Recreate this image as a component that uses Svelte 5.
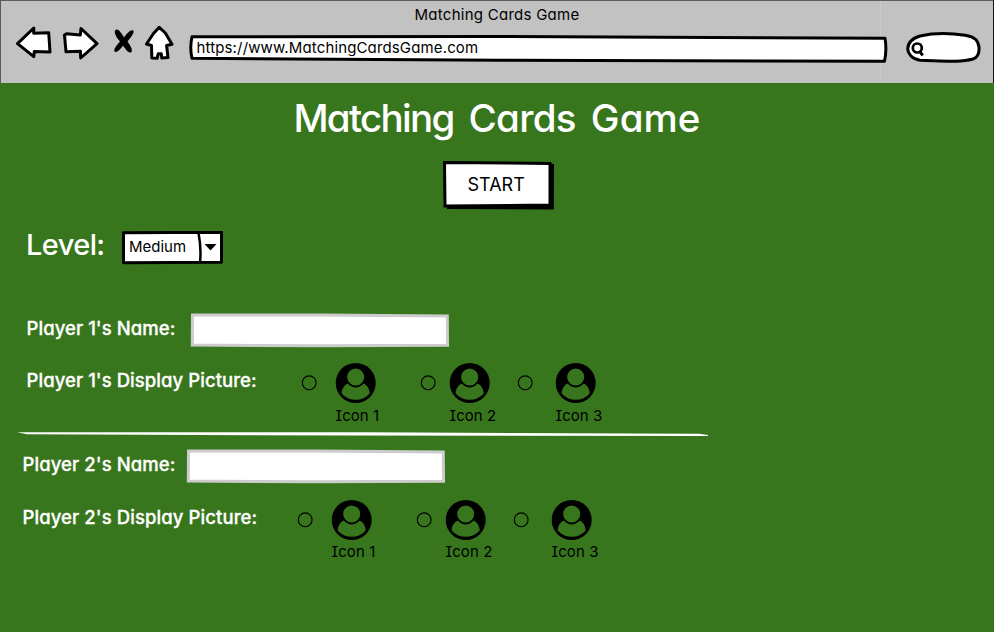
<script>
  const heading = [
    { word: 'Matching', spacing: -1.7 },
    { word: 'Cards', spacing: -0.7 },
    { word: 'Game', spacing: 0.1 }
  ];
  const players = [
    { id: 1, left: 26, gap: 16, spacing: 0.06, captionLine: 26 },
    { id: 2, left: 22, gap: 17, spacing: 0.09, captionLine: 24 }
  ];
  const options = [
    { n: 1, width: 119, gap: 18 },
    { n: 2, width: 97, gap: 13 },
    { n: 3, width: 90, gap: 22 }
  ];
</script>

<div class="page">
  <header>
    <div class="title">Matching Cards Game</div>
    <nav>
      <svg class="back" width="38" height="34" viewBox="15 26 38 34">
        <path class="ink" d="M17.5 43.6 33.8 28 33.7 33.2 48.7 32.8 50 52 34.3 51.4 33.8 56.7Z" />
      </svg>
      <svg class="forward" width="38" height="34" viewBox="62 26 38 34">
        <path class="ink" d="M64.5 35 66.5 33.8 80.3 35 81 28.5 97 43.6 80.7 58 80.4 51.3 66 51.8Z" />
      </svg>
      <svg class="stop" width="22" height="26" viewBox="113 28 22 26">
        <path d="M115.500 30C118 28.300 120.800 32 124 37.500 127 33 130.500 29.500 133 30.300 135.300 32 130.500 38 127.500 41.500 130 45 133 49.500 131.500 52 128.500 54.500 125.500 48.500 123 45.800 120.500 49 117 53 114.800 51.800 112.800 49.500 117 45 120 41.500 116 37 113.500 32 115.500 30Z" />
      </svg>
      <svg class="home" width="30" height="36" viewBox="144 25 30 36">
        <path class="ink" d="M159.200 27.300 165.300 33 172 44.300 166.600 45.500 168 57.600 161.800 58 161.200 53.800 158.200 53.800 157.200 58.200 151.800 58 151.500 45.500 146.500 44 153.500 33.500Z" />
      </svg>
      <div class="address">
        <svg width="700" height="29" viewBox="188 34 700 29">
          <path class="ink" d="M192 36.700 500 36.500 885 38.300Q887 50 884.500 61.200L500 60.300 192 58.300Q189.500 48 192 36.700Z" />
        </svg>
        <span>https://www.MatchingCardsGame.com</span>
      </div>
      <svg class="search" width="78" height="34" viewBox="905 31 78 34">
        <path class="ink" d="M920 36C932 33.300 950 33 965 35.200 976 37 978 41 979 47 979.500 53 978.500 57 973 59 960 62.500 945 61 920 60.300 912 59 908 54 907.700 49 908 42 913 38 920 36Z" />
        <circle cx="917.300" cy="48" r="4.500" fill="none" stroke="#000" stroke-width="2.700" />
        <path d="M919.500 50.800 922.700 55.500" stroke="#000" stroke-width="3" />
      </svg>
    </nav>
  </header>

  <main>
    <h1>
      {#each heading as h}
        <span style="letter-spacing: {h.spacing}px">{h.word}</span>
      {/each}
    </h1>
    <button class="start">
      <svg width="112" height="49" viewBox="443 161 112 49">
        <path d="M447 164 550 163.500 554 164 553.800 209.500 447 209 446.500 205Z" />
        <path d="M444.500 162.500 550 163.500 550 205 445 206Z" fill="#fff" stroke="#000" stroke-width="3" />
      </svg>
      <span>START</span>
    </button>

    <div class="level">
      <span class="level-label">Level:</span>
      <div class="select">
        <svg width="102" height="34" viewBox="122 231 102 34">
          <path class="box" d="M123.500 232.700 221.500 232.300 221.500 262.300 123.500 262.700Z" />
          <path d="M198.500 233Q201.500 248 200 262.500" fill="none" stroke="#000" stroke-width="2.500" />
          <path d="M204.500 244H216.500L210.500 250.500Z" />
        </svg>
        <span>Medium</span>
      </div>
    </div>

    {#each players as p}
      <section style="padding-left: {p.left}px; letter-spacing: {p.spacing}px">
        <div class="name">
          <label for="name{p.id}">Player {p.id}'s Name:</label>
          <div class="field">
            <svg width="260" height="35" viewBox="0 0 260 35">
              <path d="M2.500 2 130 2 257.300 3 257.500 32.300 130 32.800 2.300 32Z" fill="#fff" stroke="#ccc" stroke-width="3" />
            </svg>
            <input id="name{p.id}" type="text" />
          </div>
        </div>
        <div class="pictures" style="margin-top: {p.gap}px">
          <div class="caption">Player {p.id}'s Display Picture:</div>
          {#each options as o}
            <div class="option" style="width: {o.width}px; gap: {o.gap}px">
              <svg width="16" height="40" viewBox="0 0 16 40"><circle cx="8.200" cy="19.800" r="6.900" fill="none" stroke="#000" stroke-width="1.100" /></svg>
              <div class="avatar">
                <svg width="41" height="40" viewBox="0 0 41 40">
                  <circle cx="20.700" cy="20" r="20" />
                  <path class="skin" d="M12.700 20.500Q20.700 28.500 28.700 20.500C32.200 22 34.700 26.500 34.700 30.500Q29.200 36.800 20.700 36.800 12.200 36.800 6.700 30.500C6.700 26 9.200 22 12.700 20.500Z" />
                  <circle class="skin" cx="20.700" cy="14" r="9.200" stroke="#000" stroke-width="1.300" />
                </svg>
                <div class="icon-name" style="line-height: {p.captionLine}px">Icon {o.n}</div>
              </div>
            </div>
          {/each}
        </div>
      </section>
      {#if p.id === 1}
        <svg class="divider" width="692" height="5" viewBox="0 0 692 5">
          <path d="M0 .3 350 .3 682 1.800 691 3 691 4 340 3.600 10 2.300Z" fill="#fff" />
        </svg>
      {/if}
    {/each}
  </main>
</div>

<style>
  :global(body) { margin: 0; background: #38761d; }
  .page {
    width: 994px;
    height: 632px;
    overflow: hidden;
    box-sizing: border-box;
    background: #38761d;
    color: #000;
    font-family: Inter, Lato, sans-serif;
    font-size: 15px;
    font-feature-settings: 'cv11';
  }
  svg { display: block; flex: none; }
  span, .icon-name { white-space: nowrap; }
  .ink { fill: #fff; stroke: #000; stroke-width: 3; stroke-linejoin: round; }
  header {
    box-sizing: border-box;
    height: 83px;
    background: linear-gradient(#cbcbcb, #cbcbcb) 879px 0 / 1px 100% no-repeat #c2c2c2;
    border: solid #5c5a5c;
    border-width: 1px 1px 0;
    border-right-color: #111;
  }
  .title { height: 28px; line-height: 28px; text-align: center; letter-spacing: 0.26px; }
  nav { display: flex; padding-left: 14px; }
  .back { margin-top: -3px; }
  .forward { margin: -3px 0 0 9px; }
  .stop { margin: -1px 0 0 13px; }
  .home { margin: -4px 0 0 9px; }
  .address { position: relative; margin: 5px 0 0 14px; width: 700px; height: 29px; }
  .address span { position: absolute; left: 8.500px; top: 0; line-height: 28px; letter-spacing: 0.14px; }
  .search { margin: 2px 0 0 17px; }
  h1 {
    display: flex;
    justify-content: center;
    gap: 15px;
    margin: 0;
    color: #fff;
    font-weight: 500;
    font-size: 38.500px;
    line-height: 70px;
  }
  .start { position: relative; display: block; width: 112px; height: 49px; margin: 8px 0 0 443px; padding: 0; border: 0; background: none; font: inherit; font-feature-settings: inherit; color: #000; }
  .start span { position: absolute; left: 24.500px; top: 0; font-size: 18px; line-height: 48px; }
  .level { display: flex; height: 34px; margin: 21px 0 0 26px; color: #fff; }
  .level-label { width: 96px; font-size: 29px; font-weight: 500; line-height: 28px; letter-spacing: -0.6px; }
  .select { position: relative; color: #000; }
  .select span { position: absolute; left: 7px; top: 0; line-height: 31px; }
  .box { fill: #fff; stroke: #000; stroke-width: 3; stroke-linejoin: round; }
  section { margin-top: 48px; color: #fff; }
  .divider { margin: 8px 0 0 17px; }
  .divider + section { margin-top: 12px; }
  .name { display: flex; height: 34px; }
  label, .caption { box-sizing: border-box; padding-left: 0.5px; font-size: 18.500px; font-weight: 500; -webkit-text-stroke: 0.3px #fff; }
  label { width: 164px; line-height: 31px; }
  .field { position: relative; }
  input { position: absolute; inset: 3px; border: 0; outline: 0; background: none; font: inherit; }
  .pictures { display: flex; height: 61px; }
  .caption { width: 275px; line-height: 35px; }
  .option { display: flex; color: #000; }
  .avatar { width: 41px; font-feature-settings: 'cv11', 'cv08'; }
  .icon-name { padding-left: 0.5px; }
  .skin { fill: #38761d; }
</style>
